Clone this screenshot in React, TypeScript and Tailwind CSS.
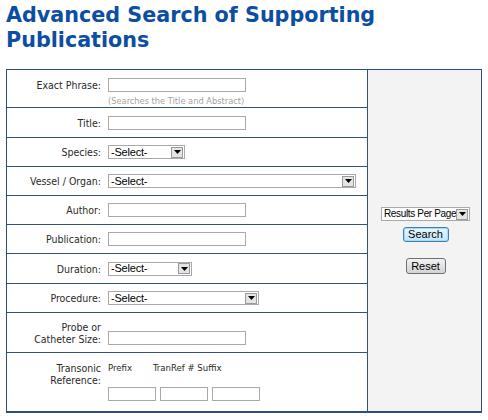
const labelFont = "font-['DejaVu_Sans_Condensed','DejaVu_Sans',sans-serif]";
const ctrlFont = "font-['Liberation_Sans',Arial,sans-serif]";

function TextBox({ w = "w-[138px]" }: { w?: string }) {
  return <div className={"h-[14px] border border-[#a9a9a9] bg-white " + w} />;
}

function Arrow() {
  return (
    <span className="flex h-[11px] w-[12px] shrink-0 items-center justify-center border border-[#9a9a9a] bg-[#e4e4e4]">
      <svg width="7" height="4" viewBox="0 0 7 4">
        <path d="M0 0h7L3.5 4z" fill="#000" />
      </svg>
    </span>
  );
}

function Select({ w, label = "-Select-", small = false }: { w: string; label?: string; small?: boolean }) {
  return (
    <div
      className={
        "flex h-[14px] items-center justify-between border border-[#a9a9a9] bg-white pl-[2px] pr-px leading-none text-black " +
        (small ? "text-[10px] " : "text-[11px] ") +
        ctrlFont +
        " " +
        w
      }
    >
      <span className={"whitespace-nowrap " + (small ? "tracking-[-0.35px]" : "tracking-[-0.2px]")}>{label}</span>
      <Arrow />
    </div>
  );
}

function Row({
  label,
  children,
  h,
}: {
  label: React.ReactNode;
  children: React.ReactNode;
  h: string;
}) {
  return (
    <div className={"grid grid-cols-[94px_1fr] items-center gap-x-[7px] border-b border-[#35507c] " + h}>
      <div className="text-right">{label}</div>
      <div>{children}</div>
    </div>
  );
}

export default function App() {
  return (
    <div className={"min-h-[420px] bg-white px-[6px] pt-[3px] text-[#2a2a2a] " + labelFont}>
      <h1 className="font-['DejaVu_Sans',Verdana,sans-serif] text-[20.7px] font-bold leading-[25px] text-[#0b4ea2]">
        Advanced Search of Supporting
        <br />
        Publications
      </h1>

      <div className="mt-[16px] flex w-[476px] border border-b-2 border-[#2f4c7b] text-[10.5px] leading-[12px]">
        <div className="flex w-[360px] flex-col">
          <div className="grid h-[38px] grid-cols-[94px_1fr] gap-x-[7px] border-b border-[#35507c] pt-[8px]">
            <div className="pt-px text-right leading-[13px]">Exact Phrase:</div>
            <div className="flex flex-col">
              <TextBox />
              <span className="mt-[4px] whitespace-nowrap text-[9.2px] leading-[10px] text-[#a3a3a3]">
                (Searches the Title and Abstract)
              </span>
            </div>
          </div>
          <Row label="Title:" h="h-[30px]">
            <TextBox />
          </Row>
          <Row label="Species:" h="h-[29px]">
            <Select w="w-[77px]" />
          </Row>
          <Row label="Vessel / Organ:" h="h-[29px]">
            <Select w="w-[248px]" />
          </Row>
          <Row label="Author:" h="h-[29px]">
            <TextBox />
          </Row>
          <Row label="Publication:" h="h-[29px]">
            <TextBox />
          </Row>
          <Row label="Duration:" h="h-[30px]">
            <Select w="w-[84px]" />
          </Row>
          <Row label="Procedure:" h="h-[29px]">
            <Select w="w-[151px]" />
          </Row>
          <div className="grid h-[40px] grid-cols-[94px_1fr] items-end gap-x-[7px] border-b border-[#35507c] pb-[7px]">
            <div className="text-right">
              Probe or
              <br />
              Catheter Size:
            </div>
            <TextBox />
          </div>
          <div className="grid h-[58px] grid-cols-[94px_1fr] gap-x-[7px] pt-[9px]">
            <div className="text-right">
              Transonic
              <br />
              Reference:
            </div>
            <div className="flex flex-col">
              <div className="flex whitespace-nowrap text-[9.5px] leading-[12px]">
                <span className="w-[45px]">Prefix</span>
                <span>TranRef # Suffix</span>
              </div>
              <div className="mt-[13px] flex gap-[4px]">
                <TextBox w="w-[48px]" />
                <TextBox w="w-[48px]" />
                <TextBox w="w-[48px]" />
              </div>
            </div>
          </div>
        </div>

        <div className="flex flex-1 flex-col items-center justify-center border-l border-[#35507c] bg-[#f3f3f3] pl-[2px]">
          <Select w="w-[89px]" label="Results Per Page" small />
          <button
            className={
              "mt-[6px] h-[15px] w-[46px] rounded-[3px] border border-[#3c7fb1] bg-gradient-to-b from-[#eaf6fd] to-[#bee6fd] text-[11px] leading-none text-black shadow-[inset_0_0_0_1px_#a8d8f6] " +
              ctrlFont
            }
          >
            Search
          </button>
          <button
            className={
              "mt-[16px] h-[16px] w-[40px] rounded-[3px] border border-[#707070] bg-gradient-to-b from-[#f2f2f2] to-[#d4d4d4] text-[11px] leading-none text-black " +
              ctrlFont
            }
          >
            Reset
          </button>
        </div>
      </div>
    </div>
  );
}
